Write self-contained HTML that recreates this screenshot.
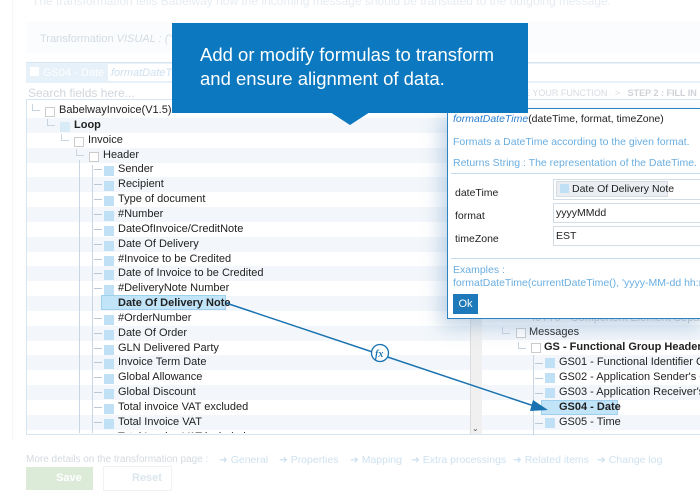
<!DOCTYPE html>
<html><head><meta charset="utf-8"><style>
*{margin:0;padding:0;box-sizing:border-box}
body{width:700px;height:500px;overflow:hidden;background:#fff;font-family:"Liberation Sans",sans-serif;font-size:11px;color:#222;position:relative}
.a{position:absolute;white-space:nowrap}
.faint{color:#e6ecf2}
.row{position:absolute;left:27px;width:443px;height:15px}
.row.s{background:#f3f7fb}
.t{position:absolute;font-size:11px;color:#222;white-space:nowrap}
.cb{position:absolute;width:10px;height:10px;background:#bfe0f5}
.eb{position:absolute;width:10px;height:10px;border:1px solid #ccc;background:#fff}
.ln{position:absolute;height:1px;width:8px;background:#b8c8d8}
.vl{position:absolute;width:1px;background:#c8d6e4}
.cn{position:absolute;width:8px;height:7px;border-left:1px solid #c8d4e0;border-bottom:1px solid #c8d4e0}
.fl{position:absolute;top:454px;color:#cfe2f0;font-size:10.5px;white-space:nowrap}
</style></head><body>
<div class="a faint" style="left:32px;top:-6px;font-size:12px">The transformation tells Babelway how the incoming message should be translated to the outgoing message.</div>
<div class="a" style="left:26px;top:22px;width:674px;height:31px;background:#fafcfe"></div>
<div class="a" style="left:40px;top:33px;font-size:11px;color:#d3dbe2">Transformation <i>VISUAL : ("Bab</i></div>
<div class="a" style="left:12px;top:0;width:1px;height:440px;background:#f4f6f8"></div>
<div class="a" style="left:26px;top:62px;width:674px;height:21px;background:#e6f1f9;border-top:1px solid #d6e6f3"></div>
<div class="a" style="left:30px;top:67px;width:9px;height:9px;background:#fff"></div>
<div class="a" style="left:43px;top:67px;color:#fff;font-size:11px">GS04 - Date =</div>
<div class="a" style="left:108px;top:64px;width:592px;height:17px;background:#fff"></div>
<div class="a" style="left:111px;top:67px;color:#cfe0f0;font-style:italic">formatDateTim</div>
<div class="a" style="left:26px;top:83px;width:674px;height:17px;border-bottom:1px solid #d6e6f3"></div>
<div class="a" style="left:28px;top:86px;color:#d0d6dc;font-size:12px">Search fields here...</div>
<div class="a" style="left:524px;top:88px;color:#d6dce2;font-size:9px">E YOUR FUNCTION &nbsp; &gt; &nbsp; <b style="color:#cfd3d7">STEP 2 : FILL IN</b></div>
<div class="a" style="left:26px;top:100px;width:456px;height:335px;border:1px solid #d6e6f3;border-top:none"></div>
<div id="rows" class="a" style="left:0;top:0;width:470px;height:433px;overflow:hidden"></div>
<div class="a" style="left:470px;top:100px;width:12px;height:334px;background:#f0f0f0;border-left:1px solid #ddd"></div>
<div class="a" style="left:472px;top:424px;font-size:8px;color:#555">⌄</div>
<div class="a" style="left:26px;top:434px;width:674px;height:1px;background:#d6e6f3"></div>
<div class="a" style="left:482px;top:318px;width:218px;height:116px;background:#fff"></div>
<div class="a" style="left:482px;top:325px;width:218px;height:15px;background:#f3f7fb"></div>
<div class="a" style="left:482px;top:355px;width:218px;height:15px;background:#f3f7fb"></div>
<div class="a" style="left:482px;top:385px;width:218px;height:15px;background:#f3f7fb"></div>
<div class="a" style="left:482px;top:415px;width:218px;height:15px;background:#f3f7fb"></div>
<div class="a" style="left:532px;top:312px;color:#c9ccd0;font-size:11px">I0TT0 - Component Element Separ</div>
<div class="cn" style="left:502px;top:327px"></div>
<div class="eb" style="left:516px;top:328px"></div><div class="t" style="left:529px;top:326px">Messages</div>
<div class="cn" style="left:518px;top:342px"></div>
<div class="eb" style="left:531px;top:343px"></div><div class="t" style="left:544px;top:341px;font-weight:bold">GS - Functional Group Header</div>
<div class="vl" style="left:533px;top:355px;height:80px"></div>
<div class="ln" style="left:535px;top:363px"></div><div class="cb" style="left:545px;top:358px"></div><div class="t" style="left:559px;top:356px">GS01 - Functional Identifier Code</div>
<div class="ln" style="left:535px;top:378px"></div><div class="cb" style="left:545px;top:373px"></div><div class="t" style="left:559px;top:371px">GS02 - Application Sender's Code</div>
<div class="ln" style="left:535px;top:393px"></div><div class="cb" style="left:545px;top:388px"></div><div class="t" style="left:559px;top:386px">GS03 - Application Receiver's Code</div>
<div class="a" style="left:541px;top:400px;width:77px;height:15px;background:#c2e4f8;border:1px solid #9fd0ee"></div>
<div class="t" style="left:559px;top:401px;font-weight:bold">GS04 - Date</div>
<div class="ln" style="left:535px;top:423px"></div><div class="cb" style="left:545px;top:418px"></div><div class="t" style="left:559px;top:416px">GS05 - Time</div>
<svg class="a" style="left:0;top:0" width="700" height="500">
<line x1="226" y1="303" x2="540" y2="408" stroke="#1a73b0" stroke-width="1.5"/>
<polygon points="548,410 533,400 530,411" fill="#1a73b0"/>
<circle cx="380" cy="353" r="8.5" fill="#fff" stroke="#1a73b0" stroke-width="1.3"/>
<text x="375" y="357" font-family="Liberation Serif" font-style="italic" font-weight="bold" font-size="10" fill="#1a73b0">fx</text>
</svg>
<div class="a" style="left:447px;top:108px;width:260px;height:211px;background:#fff;border:1.5px solid #2a82c2;box-shadow:-6px 8px 18px rgba(120,160,200,.45);font-size:10.5px">
 <div class="a" style="left:5px;top:4px"><i style="color:#2a7fd0">formatDateTime</i>(dateTime, format, timeZone)</div>
 <div class="a" style="left:5px;top:27px;color:#6aaee0">Formats a DateTime according to the given format.</div>
 <div class="a" style="left:5px;top:48px;color:#6aaee0">Returns String : The representation of the DateTime.</div>
 <div class="a" style="left:3px;top:64px;width:260px;height:1px;background:#c6dcec"></div>
 <div class="a" style="left:7px;top:78px">dateTime</div>
 <div class="a" style="left:7px;top:101px">format</div>
 <div class="a" style="left:7px;top:124px">timeZone</div>
 <div class="a" style="left:105px;top:70px;width:160px;height:21px;border:1px solid #d3dde6"></div>
 <div class="a" style="left:108px;top:72px;width:112px;height:16px;background:#eaeef2;border:1px solid #d6dde3"></div>
 <div class="a" style="left:112px;top:75px;width:9px;height:9px;background:#bfe0f5"></div>
 <div class="a" style="left:124px;top:74px">Date Of Delivery Note</div>
 <div class="a" style="left:105px;top:94px;width:160px;height:20px;border:1px solid #d3dde6;padding:3px 2px">yyyyMMdd</div>
 <div class="a" style="left:105px;top:117px;width:160px;height:20px;border:1px solid #d3dde6;padding:3px 2px">EST</div>
 <div class="a" style="left:3px;top:149px;width:260px;height:1px;background:#c6dcec"></div>
 <div class="a" style="left:5px;top:155px;color:#6aaee0">Examples :</div>
 <div class="a" style="left:5px;top:168px;color:#6aaee0">formatDateTime(currentDateTime(), 'yyyy-MM-dd hh:mm:ss</div>
 <div class="a" style="left:5px;top:185px;width:25px;height:20px;background:#1e79ba;color:#fff;text-align:center;line-height:20px;font-size:11px">Ok</div>
</div>
<div class="a" style="left:172px;top:23px;width:356px;height:90px;background:#0b78bf"></div>
<svg class="a" style="left:330px;top:112px" width="45" height="16"><polygon points="0,0 40,0 20,13" fill="#0b78bf"/></svg>
<div class="a" style="left:200px;top:43px;color:#fff;font-size:18.5px;line-height:24px">Add or modify formulas to transform<br>and ensure alignment of data.</div>
<div class="a" style="left:26px;top:454px;color:#d3dae0;font-size:10px">More details on the transformation page :</div>
<div class="fl" style="left:219px">➜ General</div>
<div class="fl" style="left:279px">➜ Properties</div>
<div class="fl" style="left:350px">➜ Mapping</div>
<div class="fl" style="left:411px">➜ Extra processings</div>
<div class="fl" style="left:513px">➜ Related items</div>
<div class="fl" style="left:597px">➜ Change log</div>
<div class="a" style="left:26px;top:467px;width:67px;height:23px;background:#dcebd8;color:#fff;font-weight:bold;padding:5px 0 0 30px">Save</div>
<div class="a" style="left:103px;top:466px;width:69px;height:25px;border:1px solid #f0f2f4;color:#dbe6ee;font-weight:bold;padding:5px 0 0 28px">Reset</div>
<script>
var items=[["BabelwayInvoice(V1.5)",0,'e'],["Loop",1,'b'],["Invoice",2,'e'],["Header",3,'e'],["Sender",4],["Recipient",4],["Type of document",4],["#Number",4],["DateOfInvoice/CreditNote",4],["Date Of Delivery",4],["#Invoice to be Credited",4],["Date of Invoice to be Credited",4],["#DeliveryNote Number",4],["Date Of Delivery Note",4,'sel'],["#OrderNumber",4],["Date Of Order",4],["GLN Delivered Party",4],["Invoice Term Date",4],["Global Allowance",4],["Global Discount",4],["Total invoice VAT excluded",4],["Total Invoice VAT",4],["Total Invoice VAT included",4]];
var h='';
items.forEach(function(it,i){var y=103+i*14.85;
 if(i%2==1)h+='<div class="row s" style="top:'+(y)+'px"></div>';
 var lx=[31,46,60,75,100][it[1]];
 var ty=y+1;
 if(it[1]<4){h+='<div class="cn" style="left:'+(lx+1)+'px;top:'+(ty)+'px"></div>';
  var bx=lx+14;
  if(it[2]=='b')h+='<div class="cb" style="left:'+bx+'px;top:'+(ty+3)+'px;background:#d8ecf8"></div><div class="t" style="left:'+(bx+14)+'px;top:'+ty+'px;font-weight:bold">'+it[0]+'</div>';
  else h+='<div class="eb" style="left:'+bx+'px;top:'+(ty+3)+'px"></div><div class="t" style="left:'+(bx+14)+'px;top:'+ty+'px">'+it[0]+'</div>';
 } else {
  if(it[2]=='sel')h+='<div class="a" style="left:101px;top:'+(y-1)+'px;width:125px;height:15px;background:#c2e4f8;border:1px solid #9fd0ee"></div><div class="t" style="left:118px;top:'+ty+'px;font-weight:bold">'+it[0]+'</div>';
  else h+='<div class="ln" style="left:94px;top:'+(y+7)+'px"></div><div class="cb" style="left:104px;top:'+(ty+3)+'px"></div><div class="t" style="left:118px;top:'+ty+'px">'+it[0]+'</div>';
 }
});
h+='<div class="vl" style="left:79px;top:160px;height:275px"></div><div class="vl" style="left:92px;top:165px;height:270px"></div>';
document.getElementById('rows').innerHTML=h;
</script>
</body></html>
